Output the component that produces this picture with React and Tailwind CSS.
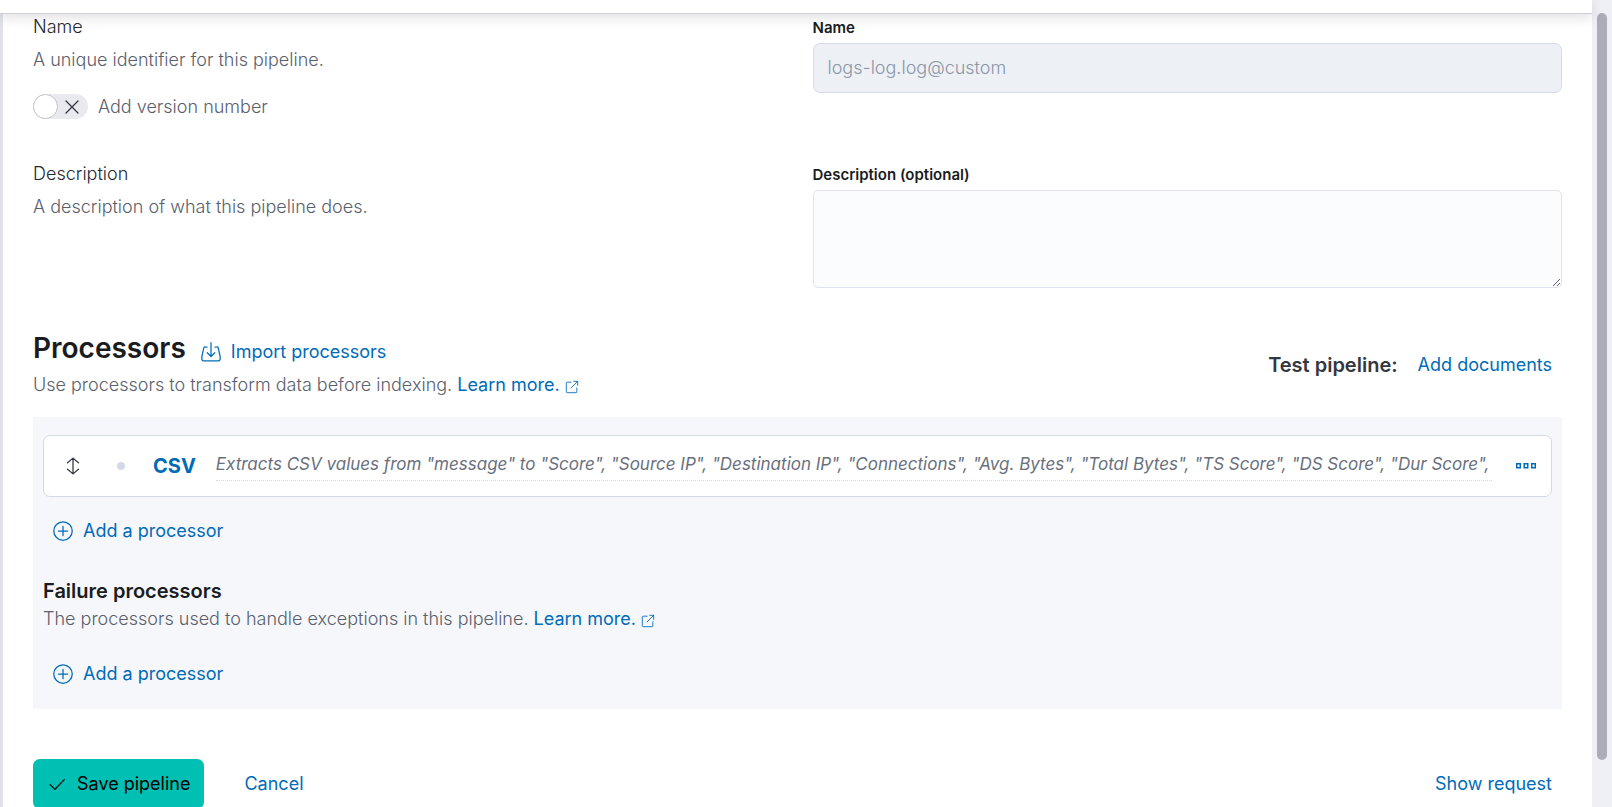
import React, { useState } from 'react';

const LINK = 'text-[#006bb8] hover:underline';

function ImportIcon() {
  return (
    <svg width="20" height="20" viewBox="0 0 16 16" fill="none" stroke="currentColor" strokeLinecap="round" strokeLinejoin="round">
      <path d="M4.8 4H3.200a1 1 0 0 0-1 .8L.7 11.500v2.300a1.200 1.200 0 0 0 1.200 1.200h12.200a1.200 1.200 0 0 0 1.200-1.200v-2.300L13.800 4.800a1 1 0 0 0-1-.8h-1.600" />
      <path d="M8 .5v11M5 8.600l3 3 3-3" />
    </svg>
  );
}

function PopoutIcon() {
  return (
    <svg className="inline align-[-3px]" width="14" height="14" viewBox="0 0 16 16" fill="none" stroke="currentColor" strokeLinecap="round" strokeLinejoin="round">
      <path d="M7 2.500H2.500a1 1 0 0 0-1 1v10a1 1 0 0 0 1 1h10a1 1 0 0 0 1-1V9M10 1.500h4.500V6M14.500 1.500 7 9" />
    </svg>
  );
}

function PlusInCircleIcon() {
  return (
    <svg width="20" height="20" viewBox="0 0 16 16" fill="none" stroke="currentColor" strokeLinecap="round">
      <circle cx="8" cy="8" r="7.400" />
      <path d="M8 4.300v7.400M4.300 8h7.400" />
    </svg>
  );
}

function GrabIcon() {
  return (
    <svg width="20" height="20" viewBox="0 0 16 16" fill="none" stroke="currentColor" strokeLinecap="round" strokeLinejoin="round">
      <path d="M8 1.700v12.600M3.600 5.400 8 1.700l4.400 3.700M3.600 10.600 8 14.300l4.400-3.700" />
    </svg>
  );
}

function BoxesIcon() {
  return (
    <svg width="20" height="20" viewBox="0 0 20 20" fill="none" stroke="currentColor" strokeWidth="1.500">
      <rect x=".75" y="7.750" width="3.500" height="4" />
      <rect x="8.250" y="7.750" width="3.500" height="4" />
      <rect x="15.750" y="7.750" width="3.500" height="4" />
    </svg>
  );
}

function CheckIcon() {
  return (
    <svg width="20" height="20" viewBox="0 0 16 16" fill="none" stroke="currentColor" strokeLinecap="round" strokeLinejoin="round">
      <path d="m2.500 8.500 3.800 3.800L13.800 4.500" />
    </svg>
  );
}

function AddProcessor() {
  return (
    <button type="button" className={`flex items-center gap-[10px] h-10 px-[10px] ${LINK}`}>
      <PlusInCircleIcon />
      Add a processor
    </button>
  );
}

function FormRow({ title, help, children, extra }) {
  return (
    <div className="grid grid-cols-2 gap-[30px]">
      <div>
        <h3 className="leading-[26px] font-light text-[#25282f]">{title}</h3>
        <p className="mt-2 leading-6 font-light">{help}</p>
        {extra}
      </div>
      <div>{children}</div>
    </div>
  );
}

const fields = ['Score', 'Source IP', 'Destination IP', 'Connections', 'Avg. Bytes', 'Total Bytes', 'TS Score', 'DS Score', 'Dur Score'];

export default function App() {
  const [versioned, setVersioned] = useState(false);
  const [description, setDescription] = useState('');

  return (
    <div className="h-screen flex overflow-hidden bg-white font-['Inter',sans-serif] text-lg text-[#5a606d]">
      <div className="flex-1 min-w-0 flex flex-col">
        <header className="h-[14px] shrink-0 relative z-10 bg-white border-b border-[#cdced8] shadow-[0_3px_14px_rgba(0,0,0,0.14)]" />
        <main className="flex-1 min-h-0 overflow-hidden border-l-[3px] border-[#e0e1e9] px-[30px]">
          <FormRow
            title="Name"
            help="A unique identifier for this pipeline."
            extra={
              <label className="mt-[22px] w-fit flex items-center gap-[10px] leading-6 font-light cursor-pointer">
                <input type="checkbox" role="switch" className="peer sr-only" checked={versioned} onChange={(e) => setVersioned(e.target.checked)} />
                <span className="w-[55px] h-[25px] rounded-full bg-[#e9eaef] flex items-center text-[#343741] peer-focus-visible:ring-2">
                  <span className="w-[25px] h-[25px] rounded-full bg-white border border-[#c2c3c6]" />
                  <svg className="ml-[7px]" width="14" height="14" viewBox="0 0 14 14" fill="none" stroke="currentColor" strokeWidth="1.300" strokeLinecap="round">
                    <path d="m1 1 12 12M13 1 1 13" />
                  </svg>
                </span>
                Add version number
              </label>
            }
          >
            <label htmlFor="name" className="block pt-1 leading-5 text-[15px] font-semibold text-[#1a1c21]">Name</label>
            <input id="name" disabled value="logs-log.log@custom" className="mt-[5px] block w-full h-[50px] px-[14px] pb-[2px] rounded-[7px] border border-[#d6dbeb] bg-[#edf0f5] font-light text-[#8b96a8]" />
          </FormRow>

          <div className="mt-[42px]">
            <FormRow title="Description" help="A description of what this pipeline does.">
              <label htmlFor="description" className="block pt-1 leading-5 text-[15px] font-semibold text-[#1a1c21]">Description (optional)</label>
              <textarea id="description" value={description} onChange={(e) => setDescription(e.target.value)} className="mt-[5px] block w-full h-[98px] p-[14px] rounded-[5px] border border-[#dfe3f0] bg-[#fbfcfd] resize-y" />
            </FormRow>
          </div>

          <section className="mt-10 flex items-center justify-between">
            <div>
              <div className="flex items-center gap-[15px]">
                <h2 className="text-[28px] leading-10 font-semibold text-[#1a1c21]">Processors</h2>
                <button type="button" className={`mt-2 flex items-center gap-[10px] ${LINK}`}>
                  <ImportIcon />
                  Import processors
                </button>
              </div>
              <p className="mt-[5px] leading-6 font-light">
                Use processors to transform data before indexing.{' '}
                <a href="#learn" className={`font-normal ${LINK}`}>Learn more. <PopoutIcon /></a>
              </p>
            </div>
            <div className="flex items-center gap-5 pt-1 pr-[10px]">
              <h3 className="text-xl font-semibold text-[#343741]">Test pipeline:</h3>
              <button type="button" className={LINK}>Add documents</button>
            </div>
          </section>

          <section className="mt-5 px-[10px] pt-[18px] pb-[15px] bg-[#f5f7fa]">
            <div className="h-[62px] flex items-center pl-[19px] pr-[15px] rounded-[7px] border border-[#d3dae6] bg-white">
              <button type="button" aria-label="Move this processor" className="text-[#343741]"><GrabIcon /></button>
              <span className="ml-[34px] size-2 rounded-full bg-[#d3dae6]" />
              <a href="#csv" className="ml-7 text-xl font-bold text-[#006bb8]">CSV</a>
              <div className="ml-5 mr-6 flex-1 min-w-0 border-b border-dotted border-[#d3dae6] pb-[3px] text-[17px] leading-[26px] italic whitespace-nowrap text-[#69707d]">
                Extracts CSV values from "message" to {fields.map((f) => `"${f}",`).join(' ')}
              </div>
              <button type="button" aria-label="Show more actions" className="text-[#006bb8]"><BoxesIcon /></button>
            </div>
            <div className="mt-[14px]"><AddProcessor /></div>
            <h3 className="mt-[27px] leading-[26px] text-xl font-semibold text-[#1a1c21]">Failure processors</h3>
            <p className="mt-[3px] leading-6 font-light">
              The processors used to handle exceptions in this pipeline.{' '}
              <a href="#learn-failure" className={`font-normal ${LINK}`}>Learn more. <PopoutIcon /></a>
            </p>
            <div className="mt-[23px]"><AddProcessor /></div>
          </section>

          <div className="mt-[50px] flex items-center">
            <button type="button" className="h-[50px] px-[14px] flex items-center gap-[10px] rounded-[7px] bg-[#00bfb3] text-black">
              <CheckIcon />
              Save pipeline
            </button>
            <button type="button" className={`ml-10 ${LINK}`}>Cancel</button>
            <button type="button" className={`ml-auto mr-[10px] ${LINK}`}>Show request</button>
          </div>
        </main>
      </div>
      <div className="w-5 shrink-0 bg-[#eff0f5] pt-[13px] px-[5px] pb-[47px]">
        <div className="h-full rounded-full bg-[#abaeb9]" />
      </div>
    </div>
  );
}
